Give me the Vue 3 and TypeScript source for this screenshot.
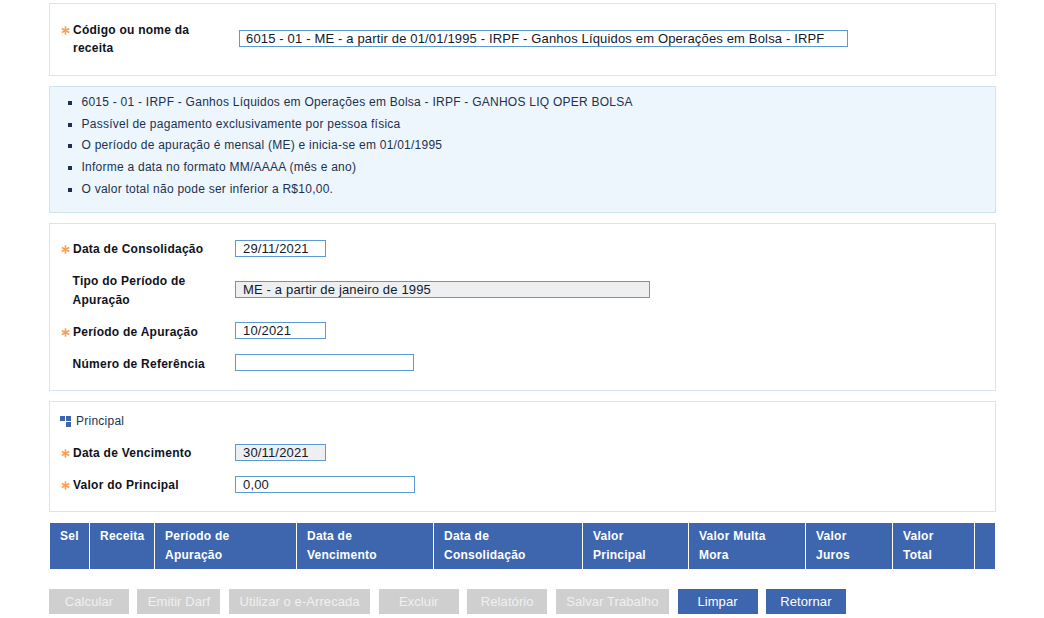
<script setup lang="ts">
const info: string[] = [
  '6015 - 01 - IRPF - Ganhos Líquidos em Operações em Bolsa - IRPF - GANHOS LIQ OPER BOLSA',
  'Passível de pagamento exclusivamente por pessoa física',
  'O período de apuração é mensal (ME) e inicia-se em 01/01/1995',
  'Informe a data no formato MM/AAAA (mês e ano)',
  'O valor total não pode ser inferior a R$10,00.',
]
const columns: string[][] = [
  ['Sel'],
  ['Receita'],
  ['Período de', 'Apuração'],
  ['Data de', 'Vencimento'],
  ['Data de', 'Consolidação'],
  ['Valor', 'Principal'],
  ['Valor Multa', 'Mora'],
  ['Valor', 'Juros'],
  ['Valor', 'Total'],
  [],
]
const disabledButtons: { label: string; width: number }[] = [
  { label: 'Calcular', width: 80 },
  { label: 'Emitir Darf', width: 83 },
  { label: 'Utilizar o e-Arrecada', width: 141.4 },
  { label: 'Excluir', width: 80 },
  { label: 'Relatório', width: 80 },
  { label: 'Salvar Trabalho', width: 113.4 },
]
</script>

<template>
  <main class="page">
    <section class="panel code-panel">
      <div class="label wrap"><svg class="star" viewBox="0 0 9 9" aria-hidden="true"><path d="M4.5 .3V8.7M.8 2.4 8.2 6.6M8.2 2.4 .8 6.6" /></svg>Código ou nome da receita</div>
      <input class="field code-field" readonly value="6015 - 01 - ME - a partir de 01/01/1995 - IRPF - Ganhos Líquidos em Operações em Bolsa - IRPF" />
    </section>

    <section class="panel info-panel">
      <ul>
        <li v-for="line in info" :key="line">{{ line }}</li>
      </ul>
    </section>

    <section class="panel form-panel">
      <div class="row">
        <div class="label"><svg class="star" viewBox="0 0 9 9" aria-hidden="true"><path d="M4.5 .3V8.7M.8 2.4 8.2 6.6M8.2 2.4 .8 6.6" /></svg>Data de Consolidação</div>
        <input class="field short" readonly value="29/11/2021" />
      </div>
      <div class="row tall">
        <div class="label wrap plain">Tipo do Período de Apuração</div>
        <input class="field disabled type-field" readonly value="ME - a partir de janeiro de 1995" />
      </div>
      <div class="row">
        <div class="label low"><svg class="star" viewBox="0 0 9 9" aria-hidden="true"><path d="M4.5 .3V8.7M.8 2.4 8.2 6.6M8.2 2.4 .8 6.6" /></svg>Período de Apuração</div>
        <input class="field short" readonly value="10/2021" />
      </div>
      <div class="row">
        <div class="label plain low">Número de Referência</div>
        <input class="field mid" readonly value="" />
      </div>
    </section>

    <section class="panel form-panel principal-panel">
      <h2 class="section-title">
        <svg width="11" height="11" viewBox="0 0 11 11" aria-hidden="true">
          <rect x="0" y="0" width="5" height="5" fill="#3e66ae" />
          <rect x="6" y="0" width="5" height="5" fill="#3e66ae" />
          <rect x="6" y="6" width="5" height="5" fill="#3e66ae" />
        </svg>
        Principal
      </h2>
      <div class="row">
        <div class="label"><svg class="star" viewBox="0 0 9 9" aria-hidden="true"><path d="M4.5 .3V8.7M.8 2.4 8.2 6.6M8.2 2.4 .8 6.6" /></svg>Data de Vencimento</div>
        <input class="field short disabled" readonly value="30/11/2021" />
      </div>
      <div class="row">
        <div class="label"><svg class="star" viewBox="0 0 9 9" aria-hidden="true"><path d="M4.5 .3V8.7M.8 2.4 8.2 6.6M8.2 2.4 .8 6.6" /></svg>Valor do Principal</div>
        <input class="field mid wide" readonly value="0,00" />
      </div>
    </section>

    <div class="table-head">
      <div v-for="(col, i) in columns" :key="i" class="th">
        <div v-for="line in col" :key="line">{{ line }}</div>
      </div>
    </div>

    <div class="buttons">
      <button
        v-for="b in disabledButtons"
        :key="b.label"
        class="btn off"
        :style="{ width: b.width + 'px' }"
        type="button"
      >{{ b.label }}</button>
      <button class="btn on" type="button">Limpar</button>
      <button class="btn on" type="button">Retornar</button>
    </div>
  </main>
</template>

<style>
html, body { margin: 0; background: #fff; }
</style>

<style scoped>
.page {
  box-sizing: border-box;
  width: 1044px;
  height: 618px;
  padding: 3px 48px 0 49px;
  overflow: hidden;
  font-family: "Liberation Sans", Arial, sans-serif;
  font-size: 12px;
  letter-spacing: 0.25px;
  color: #111a2c;
}
.panel {
  box-sizing: border-box;
  width: 947px;
  border: 1px solid #d8e4ee;
  margin-bottom: 10px;
}
.code-panel {
  height: 73px;
  display: flex;
  align-items: flex-start;
  padding: 17px 10px 0;
}
.label {
  width: 175px;
  flex: none;
  font-weight: 700;
  color: #10121c;
  line-height: 18px;
  position: relative;
  padding-left: 13px;
  box-sizing: border-box;
}
.label.wrap { width: 148px; }
.low { margin-top: 2px; }
.star {
  position: absolute;
  left: 1px;
  top: 5px;
  width: 9px;
  height: 9px;
  fill: none;
  stroke: #f5a25d;
  stroke-width: 1.7;
}
.field {
  box-sizing: border-box;
  height: 17px;
  border: 1px solid #5b9bd5;
  background: #fff;
  padding: 0 7px;
  margin: 0;
  outline: none;
  font-family: inherit;
  font-size: 13px;
  letter-spacing: 0.16px;
  color: #111a2c;
  border-radius: 0;
}
.code-field {
  width: 609px;
  margin-left: 31px;
  margin-top: 9px;
  padding-left: 6px;
}
.info-panel {
  height: 127px;
  background: #eef6fd;
  padding: 5px 0 0;
  border-color: #cfe2f0;
}
.info-panel ul {
  margin: 0;
  padding: 0 0 0 31.5px;
  list-style: square;
  color: #1b3150;
}
.info-panel li {
  line-height: 21.7px;
}
.form-panel {
  height: 168px;
  padding: 16px 10px 0;
}
.row {
  display: flex;
  align-items: center;
  height: 17px;
  margin-bottom: 15px;
}
.row.tall { height: 35px; margin-bottom: 15px; }
.form-panel .label { width: 175px; }
.plain { padding-left: 12.6px; }
.tall .label { width: 135px; margin-right: 40px; margin-top: 2px; line-height: 19px; }
.short { width: 91px; }
.mid { width: 179px; }
.wide { width: 180px; }
.type-field { width: 415px; }
.disabled { background: #eeeff0; }
.principal-panel {
  height: 111px;
  padding-top: 11px;
}
.section-title {
  margin: 0 0 15px;
  display: flex;
  align-items: center;
  gap: 5px;
  height: 16px;
  font-size: 12px;
  font-weight: 400;
  color: #1b3150;
}
.section-title svg { margin-top: 1px; }
.table-head {
  margin: 11px 0 0 1px;
  width: 945px;
  height: 46px;
  background: #3e66ae;
  display: grid;
  grid-template-columns: 40px 65px 142px 137px 149px 106px 117px 87px 82px 20px;
  color: #fff;
  font-weight: 700;
}
.th {
  box-sizing: border-box;
  border-right: 1px solid #fff;
  padding: 4px 0 0 10px;
  line-height: 19.2px;
}
.th:last-child { border-right: 0; }
.buttons {
  display: flex;
  gap: 8.46px;
  margin-top: 20px;
}
.btn {
  box-sizing: border-box;
  height: 25px;
  width: 80px;
  border: 0;
  padding: 0;
  margin: 0;
  font-family: inherit;
  font-size: 13px;
  letter-spacing: 0.08px;
  color: #fff;
  white-space: nowrap;
}
.off { background: #cfcfcf; color: #f0f0f0; }
.on { background: #3e66ae; }
</style>
